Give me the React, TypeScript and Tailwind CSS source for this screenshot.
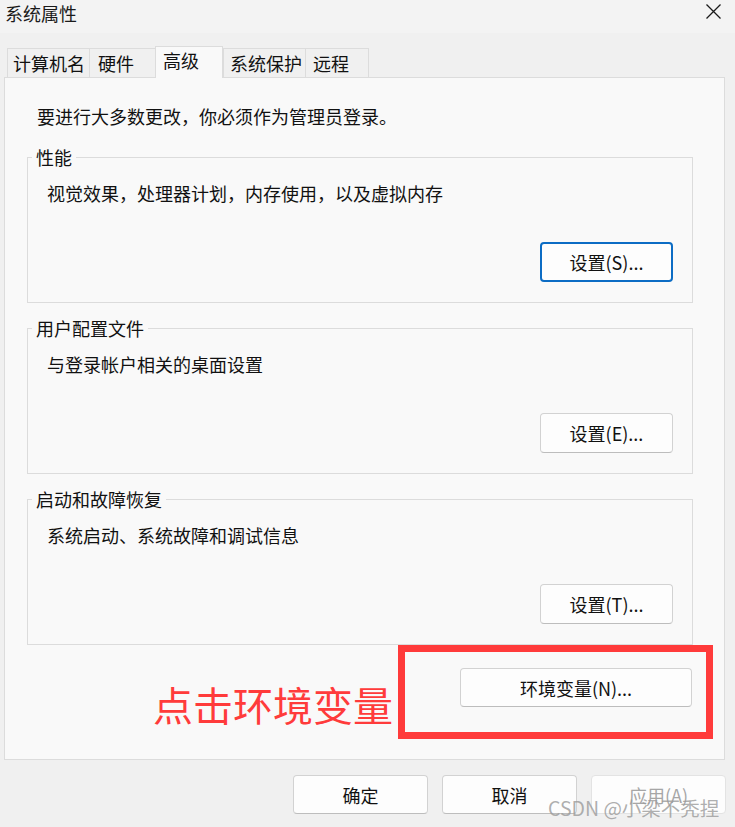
import React from 'react';

const font = "font-['Noto_Sans_CJK_SC','Noto_Sans',sans-serif]";

interface BtnProps {
  label: string;
  className?: string;
  focused?: boolean;
  disabled?: boolean;
}

const WinButton: React.FC<BtnProps> = ({ label, className = '', focused, disabled }) => {
  const border = focused
    ? 'border-2 border-[#0c6cc4]'
    : disabled
    ? 'border border-[#e3e3e3]'
    : 'border border-[#d2d2d2] border-b-[#bdbdbd]';
  return (
    <div
      className={`flex items-center justify-center rounded-[4px] bg-[#fdfdfd] text-[18px] leading-[24px] ${border} ${
        disabled ? 'text-[#a6a6a6]' : 'text-[#111]'
      } ${className}`}
    >
      {label}
    </div>
  );
};

interface GroupProps {
  title: string;
  desc: string;
  button: string;
  focused?: boolean;
}

// fieldset: border line sits at the middle of the legend
const Group: React.FC<GroupProps> = ({ title, desc, button, focused }) => (
  <fieldset className="ml-[22px] flex h-[158px] w-[666px] flex-col border border-[#dcdcdc] pl-[19px] pr-[19px]">
    <legend className="ml-[-15px] px-[4px] text-[18px] leading-[24px] text-[#111]">{title}</legend>
    <p className="mt-[12px] text-[18px] leading-[24px] text-[#111]">{desc}</p>
    <WinButton label={button} focused={focused} className="mt-[37px] h-[40px] w-[133px] self-end" />
  </fieldset>
);

const tabs = [
  { name: '计算机名', w: 'w-[82px]', pl: 'pl-[5px]' },
  { name: '硬件', w: 'w-[66px]', pl: 'pl-[8px]' },
  { name: '高级', w: 'w-[68px]', pl: 'pl-[7px]', active: true },
  { name: '系统保护', w: 'w-[82px]', pl: 'pl-[6px]' },
  { name: '远程', w: 'w-[64px]', pl: 'pl-[7px]' },
];

export default function App() {
  return (
    <div className={`relative h-[827px] w-[735px] overflow-hidden bg-[#f0f0f0] ${font}`}>
      {/* title bar */}
      <div className="flex h-[33px] items-start justify-between bg-[#f3f3f3] pl-[5px] pr-[14px] pt-[1px]">
        <span className="text-[18px] leading-[24px] text-[#1a1a1a]">系统属性</span>
        <svg width="15" height="15" viewBox="0 0 15 15" className="mt-[3px]">
          <path d="M0.5 0.5 L14.5 14.5 M14.5 0.5 L0.5 14.5" stroke="#1a1a1a" strokeWidth="1.3" fill="none" />
        </svg>
      </div>

      {/* tabs */}
      <div className="mt-[13px] flex h-[31px] items-end pl-[7px]">
        {tabs.map((t) =>
          t.active ? (
            <div
              key={t.name}
              className={`relative z-10 mb-[-1px] flex h-[32px] items-center border border-b-0 border-[#dcdcdc] bg-[#f9f9f9] text-[18px] text-[#111] ${t.w} ${t.pl}`}
            >
              <span className="mt-[-4px]">{t.name}</span>
            </div>
          ) : (
            <div
              key={t.name}
              className={`flex h-[29px] items-center border border-b-0 border-r-0 border-[#dcdcdc] bg-[#f0f0f0] text-[18px] text-[#111] last:border-r ${t.w} ${t.pl}`}
            >
              {t.name}
            </div>
          )
        )}
      </div>

      {/* panel */}
      <div className="ml-[4px] flex h-[683px] w-[721px] flex-col border border-[#dcdcdc] bg-[#f9f9f9]">
        <p className="ml-[32px] mt-[26px] text-[18px] leading-[24px] text-[#111]">
          要进行大多数更改，你必须作为管理员登录。
        </p>
        <div className="mt-[17px] flex flex-col gap-[13px]">
          <Group title="性能" desc="视觉效果，处理器计划，内存使用，以及虚拟内存" button="设置(S)..." focused />
          <Group title="用户配置文件" desc="与登录帐户相关的桌面设置" button="设置(E)..." />
          <Group title="启动和故障恢复" desc="系统启动、系统故障和调试信息" button="设置(T)..." />
        </div>
        <div className="mr-[32px] mt-[23px] flex justify-end">
          <WinButton label="环境变量(N)..." className="h-[39px] w-[232px]" />
        </div>
      </div>

      {/* footer buttons */}
      <div className="mt-[15px] flex justify-end gap-[14px] pr-[9px]">
        <WinButton label="确定" className="h-[39px] w-[135px]" />
        <WinButton label="取消" className="h-[39px] w-[135px]" />
        <WinButton label="应用(A)" disabled className="h-[39px] w-[135px]" />
      </div>

      {/* annotation overlay */}
      <div className="absolute left-[153px] top-[681px] text-[40px] leading-[46px] text-[#ff3b3b]">点击环境变量</div>
      <div className="absolute left-[398px] top-[645px] h-[94px] w-[315px] border-[7px] border-[#ff3b3b]" />

      {/* watermark */}
      <div className="absolute left-[548px] top-[796px] text-[19.5px] leading-[24px] text-[#9a9a9a]/80">CSDN @小梁不秃捏</div>
    </div>
  );
}
